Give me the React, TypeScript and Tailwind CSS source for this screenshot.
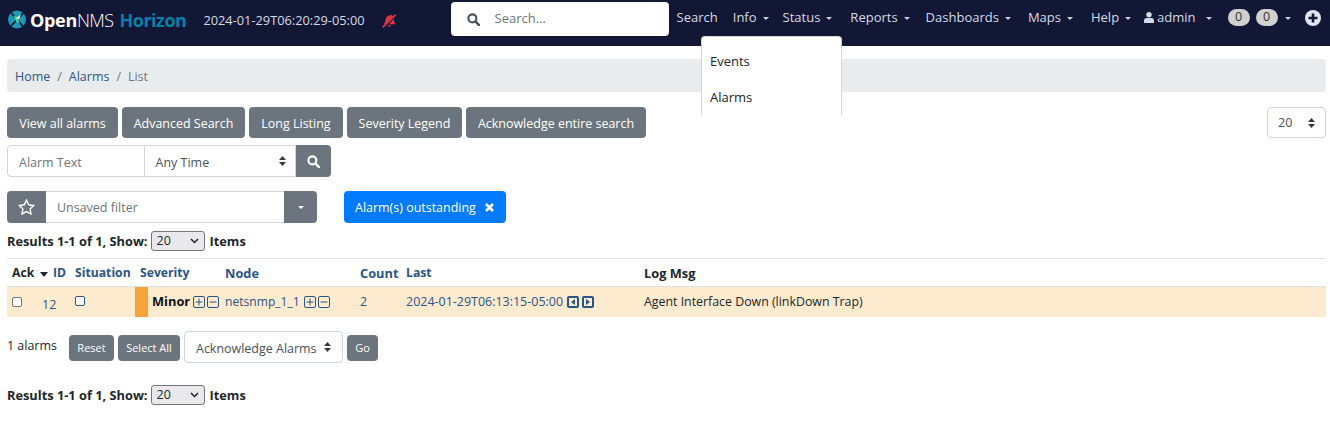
const font = { fontFamily: '"Open Sans", sans-serif' };

function Caret({ className = "" }: { className?: string }) {
  return <span className={`inline-block w-0 h-0 border-x-[3px] border-x-transparent border-t-[3px] border-t-[#c9d2de] ${className}`} />;
}

function NavItem({ label, left, caret = true }: { label: string; left: number; caret?: boolean }) {
  return (
    <span className="flex items-center text-[13px] text-[#d3dbe6] whitespace-nowrap" style={{ marginLeft: left }}>
      {label}
      {caret && <Caret className="ml-[6px] mt-[2px]" />}
    </span>
  );
}

function SearchIcon({ className = "", size = 13 }: { className?: string; size?: number }) {
  return (
    <svg width={size} height={size} viewBox="0 0 14 14" className={className} fill="none" stroke="currentColor" strokeWidth="2.2">
      <circle cx="5.8" cy="5.8" r="4.3" />
      <path d="M9 9l4 4" strokeWidth="2.6" strokeLinecap="round" />
    </svg>
  );
}

function UpDown({ className = "" }: { className?: string }) {
  return (
    <svg width="7" height="10" viewBox="0 0 7 10" className={className} fill="currentColor">
      <path d="M3.5 0L7 4H0zM0 6h7L3.5 10z" />
    </svg>
  );
}

function Logo() {
  return (
    <div className="flex items-center ml-[8px]">
      <svg width="18" height="19" viewBox="0 0 18 19">
        <circle cx="9" cy="9.5" r="9" fill="#1f9ab5" />
        <path d="M3 2.500l12 14M15.500 3L3 16" stroke="#131736" strokeWidth="1.800" />
        <path d="M5.500 5.500l3.500 1.500 3 6.500-3.500-1.500z" fill="#4fd0a8" />
        <path d="M8 8l5-3.500-2 5z" fill="#e8f3f5" />
      </svg>
      <span className="ml-[4px] text-[18px] leading-none font-bold text-white tracking-[-0.3px]">Open</span>
      <span className="text-[18px] leading-none font-light text-white tracking-[-0.6px]">NMS</span>
      <span className="ml-[6px] text-[18px] leading-none font-bold text-[#0a7fa8] tracking-[-0.5px]">Horizon</span>
    </div>
  );
}

function GrayButton({ children, className = "" }: { children: React.ReactNode; className?: string }) {
  return (
    <span className={`flex items-center justify-center rounded-[4px] bg-[#6c757d] text-white whitespace-nowrap ${className}`}>
      {children}
    </span>
  );
}

function PlusMinus({ minus = false, className = "" }: { minus?: boolean; className?: string }) {
  return (
    <svg width="12" height="12" viewBox="0 0 12 12" className={`text-[#2b5486] ${className}`} fill="none" stroke="currentColor">
      <rect x="0.5" y="0.5" width="11" height="11" rx="1.5" />
      <path d={minus ? "M2.500 6h7" : "M2.500 6h7M6 2.500v7"} />
    </svg>
  );
}

function Arrow({ right = false, className = "" }: { right?: boolean; className?: string }) {
  return (
    <svg width="12" height="12" viewBox="0 0 12 12" className={className}>
      <rect width="12" height="12" rx="2" fill="#2b5486" />
      <rect x="2" y="2" width="8" height="8" fill="#fdebd0" />
      <path d={right ? "M4 3l4 3-4 3z" : "M8 3L4 6l4 3z"} fill="#2b5486" />
    </svg>
  );
}

function ResultsLine({ className = "" }: { className?: string }) {
  return (
    <div className={`flex items-center h-[20px] text-[12.8px] font-bold text-[#212529] ${className}`}>
      <span className="pt-[2px]">Results 1-1 of 1, Show:</span>
      <span className="ml-[4px] flex items-center justify-between w-[54px] h-[20px] rounded-[3px] border border-[#767676] bg-[#e9e9ed] pl-[4px] pr-[5px] text-[12.5px] font-normal">
        20
        <svg width="9" height="6" viewBox="0 0 9 6" fill="none" stroke="#222" strokeWidth="1.500"><path d="M1 1l3.500 3.500L8 1" /></svg>
      </span>
      <span className="ml-[4px] pt-[2px]">Items</span>
    </div>
  );
}

const gridCols = "grid grid-cols-[46px_22px_65px_85px_135px_46px_238px_1fr]";

export default function App() {
  return (
    <div className="relative w-[1330px] h-[427px] overflow-hidden bg-white text-[12.48px] text-[#212529]" style={font}>
      {/* navbar */}
      <header className="flex items-start h-[46px] bg-[#131736]">
        <div className="flex items-center h-[39px]">
          <Logo />
          <span className="ml-[17px] mt-[3px] text-[12.8px] text-[#d3dbe6] whitespace-nowrap">2024-01-29T06:20:29-05:00</span>
          <svg width="17" height="16" viewBox="0 0 16 15" className="ml-[16px] mt-[2px]" fill="#dc3545">
            <path d="M7 2.500c2-1.500 4-.5 4.500 1l-6.500 7H2.500c1-1 1.500-2.500 1.800-4.500C4.500 4.500 5.500 3 7 2.500z" />
            <path d="M11.800 5.500l.7 3 1.200 2H7.500zM6 11.500h3.500c-.2 1.800-3 1.800-3.500 0z" />
            <path d="M1.500 13.500L14 1.500" stroke="#dc3545" strokeWidth="1.500" />
          </svg>
        </div>
        <div className="ml-[53px] mt-[2px] flex items-center w-[218px] h-[34px] rounded-[4px] bg-white">
          <SearchIcon className="ml-[16px] text-[#495057]" />
          <span className="ml-[15px] text-[13px] text-[#6c757d]">Search...</span>
        </div>
        <div className="flex items-center h-[35px]">
          <NavItem label="Search" left={8} caret={false} />
          <NavItem label="Info" left={15} />
          <NavItem label="Status" left={14} />
          <NavItem label="Reports" left={18} />
          <NavItem label="Dashboards" left={16} />
          <NavItem label="Maps" left={17} />
          <NavItem label="Help" left={18} />
          <span className="ml-[13px] flex items-center text-[13px] text-[#d3dbe6]">
            <svg width="10" height="11" viewBox="0 0 10 11" fill="#d3dbe6" className="mr-[3px]">
              <circle cx="5" cy="2.800" r="2.700" />
              <path d="M0 11V8.500C0 6.800 1.500 6 2.500 6h5C8.500 6 10 6.800 10 8.500V11z" />
            </svg>
            admin
            <Caret className="ml-[10px] mt-[2px]" />
          </span>
          <span className="ml-[16px] flex items-center justify-center w-[22px] h-[17px] rounded-full bg-[#d0d0d0] text-[12.5px] text-[#333]">0</span>
          <span className="ml-[6px] flex items-center justify-center w-[22px] h-[17px] rounded-full bg-[#d0d0d0] text-[12.5px] text-[#333]">0</span>
          <Caret className="ml-[7px] mt-[2px]" />
          <svg width="16" height="16" viewBox="0 0 16 16" className="ml-[14px] mt-[1px]">
            <circle cx="8" cy="8" r="8" fill="#dfe6ef" />
            <path d="M8 3.500v9M3.500 8h9" stroke="#131736" strokeWidth="2.600" />
          </svg>
        </div>
      </header>

      {/* dropdown, cut off at its lower edge in the picture */}
      <div className="absolute left-[701px] top-[36px] w-[141px] h-[79px] z-10 overflow-hidden rounded-t-[4px] border-x border-t border-[#d5d5d5] bg-white">
        <div className="pt-[15px] pl-[8px] text-[13px] leading-[18px] text-[#212529]">Events</div>
        <div className="pt-[18px] pl-[8px] text-[13px] leading-[18px] text-[#212529]">Alarms</div>
      </div>

      <main className="px-[7px]">
        {/* breadcrumb */}
        <nav className="mt-[13px] flex items-center w-[1319px] h-[33px] rounded-[4px] bg-[#e9ecef] pl-[8px] pt-[3px] text-[12.48px]">
          <span className="text-[#2b5486]">Home</span>
          <span className="mx-[7px] text-[#6c757d]">/</span>
          <span className="text-[#2b5486]">Alarms</span>
          <span className="mx-[7px] text-[#6c757d]">/</span>
          <span className="text-[#6c757d]">List</span>
        </nav>

        {/* actions */}
        <div className="mt-[15px] flex items-start justify-between w-[1319px]">
          <div className="flex gap-[4px] text-[12.48px]">
            <GrayButton className="w-[111px] h-[31px] pt-[3px]">View all alarms</GrayButton>
            <GrayButton className="w-[123px] h-[31px] pt-[3px]">Advanced Search</GrayButton>
            <GrayButton className="w-[94px] h-[31px] pt-[3px]">Long Listing</GrayButton>
            <GrayButton className="w-[115px] h-[31px] pt-[3px]">Severity Legend</GrayButton>
            <GrayButton className="w-[180px] h-[31px] pt-[3px]">Acknowledge entire search</GrayButton>
          </div>
          <div className="flex items-center justify-between w-[59px] h-[31px] rounded-[4px] border border-[#ced4da] pl-[10px] pr-[10px] pt-[1px] text-[12.48px] text-[#495057]">
            20
            <UpDown className="text-[#343a40]" />
          </div>
        </div>

        {/* search */}
        <div className="mt-[7px] flex h-[32px] w-[324px] text-[12.48px]">
          <div className="flex items-center w-[138px] rounded-l-[4px] border border-[#ced4da] pl-[11px] pt-[4px] text-[#6c757d]">Alarm Text</div>
          <div className="flex items-center justify-between w-[152px] border-y border-r border-[#ced4da] pl-[11px] pr-[9px] pt-[4px] text-[#495057]">
            Any Time
            <UpDown className="text-[#343a40] -mt-[4px]" />
          </div>
          <GrayButton className="w-[35px] rounded-l-none">
            <SearchIcon size={13} />
          </GrayButton>
        </div>

        {/* filter */}
        <div className="mt-[14px] flex items-center">
          <div className="flex h-[32px] w-[310px] text-[12.48px]">
            <GrayButton className="w-[39px] rounded-r-none">
              <svg width="17" height="16" viewBox="0 0 17 16" fill="none" stroke="white" strokeWidth="1.400">
                <path d="M8.500 1.200l2.200 4.600 5 .7-3.600 3.500.9 5-4.500-2.400L4 15l.9-5L1.300 6.500l5-.7z" />
              </svg>
            </GrayButton>
            <div className="flex items-center flex-1 border-y border-[#ced4da] pl-[11px] pt-[2px] text-[#6c757d]">Unsaved filter</div>
            <GrayButton className="w-[33px] rounded-l-none">
              <Caret className="border-t-white" />
            </GrayButton>
          </div>
          <div className="ml-[27px] flex items-center w-[162px] h-[32px] rounded-[4px] bg-[#007bff] pl-[11px] pt-[2px] text-[12.48px] text-white">
            Alarm(s) outstanding
            <svg width="9" height="9" viewBox="0 0 9 9" className="ml-[9px] -mt-[2px]" stroke="white" strokeWidth="2.600">
              <path d="M1 1l7 7M8 1L1 8" />
            </svg>
          </div>
        </div>

        <ResultsLine className="mt-[8px]" />

        {/* alarm table */}
        <div className="mt-[7px] w-[1319px] border-t border-[#dee2e6]">
          <div className={`${gridCols} items-center h-[28px] pt-[2px] border-b border-[#dee2e6] text-[12.2px] font-bold text-[#2b5486]`}>
            <div className="flex items-center pl-[5px] text-[#212529]">
              Ack
              <span className="ml-[6px] mt-[2px] inline-block w-0 h-0 border-x-[4px] border-x-transparent border-t-[5px] border-t-[#212529]" />
            </div>
            <div>ID</div>
            <div>Situation</div>
            <div>Severity</div>
            <div className="text-[12.8px]">Node</div>
            <div className="text-[12.8px]">Count</div>
            <div>Last</div>
            <div className="text-[12.8px] text-[#212529]">Log Msg</div>
          </div>
          <div className={`${gridCols} items-center h-[30px] bg-[#fdebd0] text-[12.48px]`}>
            <div className="pl-[5px]">
              <span className="block w-[10px] h-[10px] rounded-[2px] border border-[#767676] bg-white" />
            </div>
            <div className="pt-[7px] -ml-[11px] text-[#2b5486]">12</div>
            <div>
              <span className="block -mt-[2px] w-[10px] h-[10px] rounded-[2px] border border-[#2b5486] bg-white" />
            </div>
            <div className="flex items-center h-full -ml-[5px]">
              <span className="block w-[13px] h-full bg-[#f4a43a]" />
              <span className="ml-[4px] text-[12.8px] font-bold text-[#111]">Minor</span>
              <PlusMinus className="ml-[3px]" />
              <PlusMinus minus className="ml-[2px]" />
            </div>
            <div className="flex items-center text-[12.1px] text-[#2b5486]">
              netsnmp_1_1
              <PlusMinus className="ml-[4px]" />
              <PlusMinus minus className="ml-[2px]" />
            </div>
            <div className="text-[#2b5486]">2</div>
            <div className="flex items-center text-[#2b5486]">
              2024-01-29T06:13:15-05:00
              <Arrow className="ml-[4px]" />
              <Arrow right className="ml-[3px]" />
            </div>
            <div className="text-[12.36px] text-[#212529]">Agent Interface Down (linkDown Trap)</div>
          </div>
        </div>

        {/* bulk actions */}
        <div className="mt-[14px] flex items-center">
          <span className="-mt-[1px] w-[62px] text-[12.48px]">1 alarms</span>
          <GrayButton className="mt-[1px] w-[45px] h-[26px] pt-[1px] text-[11px]">Reset</GrayButton>
          <GrayButton className="mt-[1px] ml-[4px] w-[62px] h-[26px] pt-[1px] text-[11px]">Select All</GrayButton>
          <div className="ml-[4px] flex items-center justify-between w-[159px] h-[32px] rounded-[4px] border border-[#ced4da] pl-[11px] pr-[11px] pt-[4px] text-[12.48px] text-[#495057]">
            Acknowledge Alarms
            <UpDown className="text-[#343a40] -mt-[4px]" />
          </div>
          <GrayButton className="mt-[1px] ml-[4px] w-[31px] h-[26px] pt-[1px] text-[11px]">Go</GrayButton>
        </div>

        <ResultsLine className="mt-[22px]" />
      </main>
    </div>
  );
}
